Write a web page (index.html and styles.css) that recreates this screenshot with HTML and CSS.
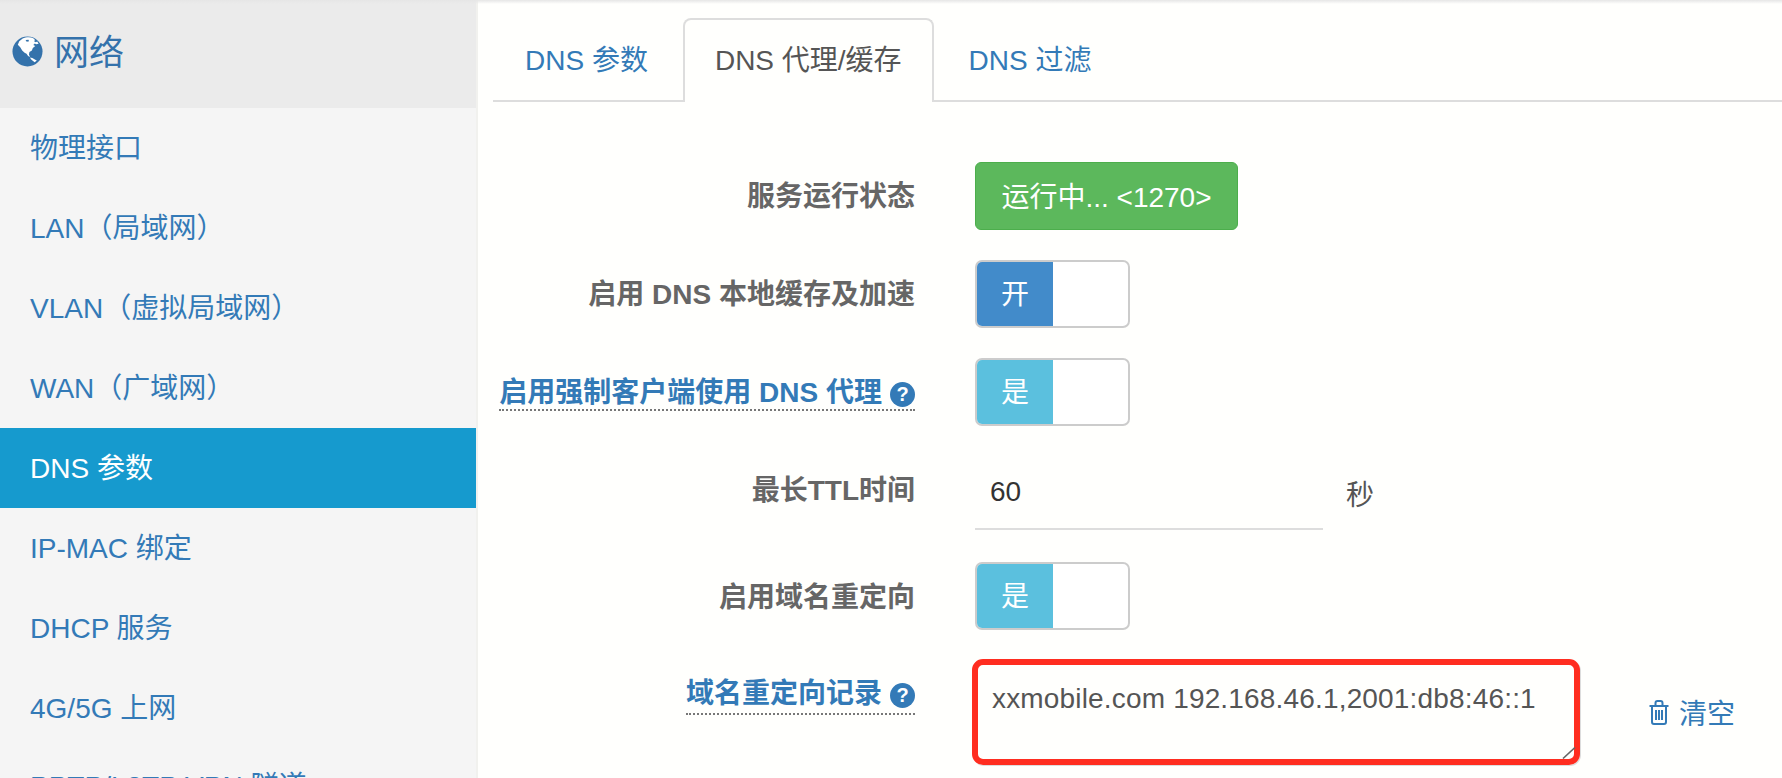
FILE: index.html
```html
<!DOCTYPE html>
<html lang="zh-CN">
<head>
<meta charset="utf-8">
<title>DNS 代理/缓存</title>
<link rel="stylesheet" href="styles.css">
</head>
<body>
<div class="shade"></div>
<aside class="sidebar">
  <h2 class="side-title">
    <svg class="globe" viewBox="0 0 32 32" aria-hidden="true">
      <circle cx="16" cy="16" r="15.5" fill="#3472ab"/>
      <path fill="#fff" d="M11 2.6 C14 1.2 19 1 22 2.2 L24 4.5 L22.5 5.2 L24.5 6.5 L26 5.8 L27.5 8 L25 8.6 L23.5 7.8 L22 9.2 L24 10.2 L21.5 12.5 L20.5 15 L18 16.5 L17.5 19 L18.6 21.8 L16.6 20.6 L15 18.2 L13 17.4 L10.5 15 L8.5 11.5 L6 9 L7.5 5.5 Z"/>
      <path fill="#fff" d="M18.5 22.2 L21 22.6 L24 24.6 L25.6 25.2 L23.4 27.2 L21.4 25.6 L19.6 24 Z"/>
      <path fill="#3472ab" d="M14 4.2 L17 3.8 L17.6 5.4 L15.2 6 Z"/>
    </svg>
    <span class="side-title-text">网络</span>
  </h2>
  <nav class="side-nav">
    <a class="side-link" href="#">物理接口</a>
    <a class="side-link" href="#">LAN（局域网）</a>
    <a class="side-link" href="#">VLAN（虚拟局域网）</a>
    <a class="side-link" href="#">WAN（广域网）</a>
    <a class="side-link active" href="#">DNS 参数</a>
    <a class="side-link" href="#">IP-MAC 绑定</a>
    <a class="side-link" href="#">DHCP 服务</a>
    <a class="side-link" href="#">4G/5G 上网</a>
    <a class="side-link" href="#">PPTP/L2TP VPN 隧道</a>
  </nav>
</aside>
<main class="content">
  <ul class="tabs">
    <li class="tab"><a href="#">DNS 参数</a></li>
    <li class="tab current"><a href="#">DNS 代理/缓存</a></li>
    <li class="tab"><a href="#">DNS 过滤</a></li>
  </ul>
  <form class="form">
    <div class="row">
      <div class="label-cell"><span class="label">服务运行状态</span></div>
      <div class="field"><button type="button" class="status">运行中... &lt;1270&gt;</button></div>
    </div>
    <div class="row">
      <div class="label-cell"><span class="label">启用 DNS 本地缓存及加速</span></div>
      <div class="field"><div class="switch"><span class="switch-on primary">开</span></div></div>
    </div>
    <div class="row">
      <div class="label-cell hint-cell"><span class="label hint">启用强制客户端使用 DNS 代理<i class="help">?</i></span></div>
      <div class="field"><div class="switch"><span class="switch-on info">是</span></div></div>
    </div>
    <div class="row row-ttl">
      <div class="label-cell"><span class="label">最长TTL时间</span></div>
      <div class="field"><input class="text-input" type="text" value="60"><span class="unit">秒</span></div>
    </div>
    <div class="row row-tight">
      <div class="label-cell label-mid"><span class="label">启用域名重定向</span></div>
      <div class="field"><div class="switch"><span class="switch-on info">是</span></div></div>
    </div>
    <div class="row">
      <div class="label-cell label-low"><span class="label hint">域名重定向记录<i class="help">?</i></span></div>
      <div class="field">
        <div class="records-box">
          <textarea class="records" spellcheck="false">xxmobile.com 192.168.46.1,2001:db8:46::1</textarea>
          <svg class="grip" viewBox="0 0 14 12" aria-hidden="true"><path d="M1 11.5L13 0.5" stroke="#666" stroke-width="1.6" fill="none"/></svg>
        </div>
        <a class="clear" href="#">
          <svg class="trash" viewBox="0 0 20 25" aria-hidden="true">
            <path fill="none" stroke="#337ab7" stroke-width="2" d="M0.5 6H19.5M3 6V22C3 23.2 3.8 24 5 24H15C16.2 24 17 23.2 17 22V6M6.5 6V3C6.5 1.8 7.3 1 8.5 1H11.5C12.7 1 13.5 1.8 13.5 3V6M7 10V20M10 10V20M13 10V20"/>
          </svg>
          <span>清空</span>
        </a>
      </div>
    </div>
  </form>
</main>
</body>
</html>
```
FILE: styles.css
```css
* { box-sizing: border-box; }
html, body { height: 100%; }
body {
  margin: 0;
  display: flex;
  height: 778px;
  overflow: hidden;
  background: #fffffd;
  color: #555;
  font-family: "Liberation Sans", "Noto Sans CJK SC", sans-serif;
  font-size: 28px;
  position: relative;
}
a { color: #337ab7; text-decoration: none; }
.shade {
  position: absolute;
  left: 0; right: 0; top: 0;
  height: 4px;
  background: linear-gradient(#e6e6e6, rgba(230,230,230,0));
  z-index: 2;
}
.sidebar {
  flex: 0 0 478px;
  height: 778px;
  overflow: hidden;
  background: #f5f5f5;
  border-right: 2px solid #f1f1ee;
}
.side-title {
  margin: 0;
  height: 108px;
  padding: 0 0 6px 12px;
  display: flex;
  align-items: center;
  gap: 11px;
  background: #ebebeb;
  color: #3472ab;
  font-size: 35px;
  font-weight: 400;
}
.side-title-text { margin-bottom: 4px; }
.globe { width: 31px; height: 31px; flex: none; }
.side-link {
  display: block;
  height: 80px;
  line-height: 81px;
  padding-left: 30px;
  white-space: nowrap;
}
.side-link:last-child { line-height: 78px; }
.side-link.active { background: #169ace; color: #fff; }
.content { flex: 1; padding: 18px 0 0 15px; min-width: 0; }
.tabs {
  list-style: none;
  margin: 0;
  padding: 0;
  display: flex;
  gap: 3px;
  height: 84px;
  border-bottom: 2px solid #ddd;
}
.tab a {
  display: block;
  height: 84px;
  line-height: 81px;
  padding: 0 30px;
  border: 2px solid transparent;
  border-bottom: 0;
  border-radius: 8px 8px 0 0;
}
.tab.current a {
  color: #555;
  background: #fffffd;
  border-color: #ddd;
}
.form { margin-top: 60px; }
.row {
  display: grid;
  grid-template-columns: 422px 1fr;
  column-gap: 60px;
  margin-bottom: 30px;
}
.row-ttl { margin-bottom: 32px; }
.row-tight { margin-bottom: 29px; }
.label-cell { text-align: right; padding-top: 15px; }
.label-mid { padding-top: 16px; }
.hint-cell { padding-top: 19px; }
.label-low { padding-top: 16px; }
.label {
  display: inline-block;
  font-weight: 700;
  color: #666;
  line-height: 40px;
  white-space: nowrap;
}
.hint {
  color: #337ab7;
  border-bottom: 2px dotted #777;
  line-height: 32px;
}
.label-low .hint { line-height: 38px; }
.help {
  display: inline-block;
  width: 25px;
  height: 25px;
  margin-left: 8px;
  border-radius: 50%;
  background: #337ab7;
  color: #fff;
  font-style: normal;
  font-size: 20px;
  font-weight: 700;
  line-height: 25px;
  text-align: center;
  vertical-align: 1px;
}
.field { display: flex; align-items: center; min-width: 0; }
.status {
  height: 68px;
  width: 263px;
  padding: 0 0 2px;
  border: 1px solid #4cae4c;
  border-radius: 6px;
  background: #5cb85c;
  color: #fff;
  font: inherit;
}
.switch {
  display: flex;
  width: 155px;
  height: 68px;
  border: 2px solid #ccc;
  border-radius: 7px;
  overflow: hidden;
  background: #fff;
}
.switch-on {
  width: 76px;
  color: #fff;
  text-align: center;
  line-height: 65px;
}
.primary { background: #428bca; }
.info { background: #5bc0de; }
.text-input {
  width: 348px;
  height: 74px;
  padding: 0 0 0 15px;
  border: 0;
  border-bottom: 2px solid #ddd;
  background: transparent;
  color: #333;
  font: inherit;
  outline: none;
}
.unit { margin-left: 23px; color: #555; }
.records-box {
  position: relative;
  flex: none;
  width: 608px;
  height: 106px;
  margin-left: -3px;
  border-radius: 11px;
  box-shadow: 1px 1px 0 #ddd;
}
.records {
  display: block;
  width: 100%;
  height: 100%;
  padding: 14px 14px;
  border: 6px solid #ff2d20;
  border-radius: 11px;
  background: #fffffd;
  color: #555;
  font: inherit;
  letter-spacing: 0.17px;
  line-height: 40px;
  outline: none;
  resize: none;
  overflow: hidden;
}
.grip {
  position: absolute;
  right: 4px;
  bottom: 6px;
  width: 14px;
  height: 12px;
}
.clear { display: flex; align-items: center; gap: 10px; margin-left: 69px; }
.trash { width: 20px; height: 25px; flex: none; }
```
